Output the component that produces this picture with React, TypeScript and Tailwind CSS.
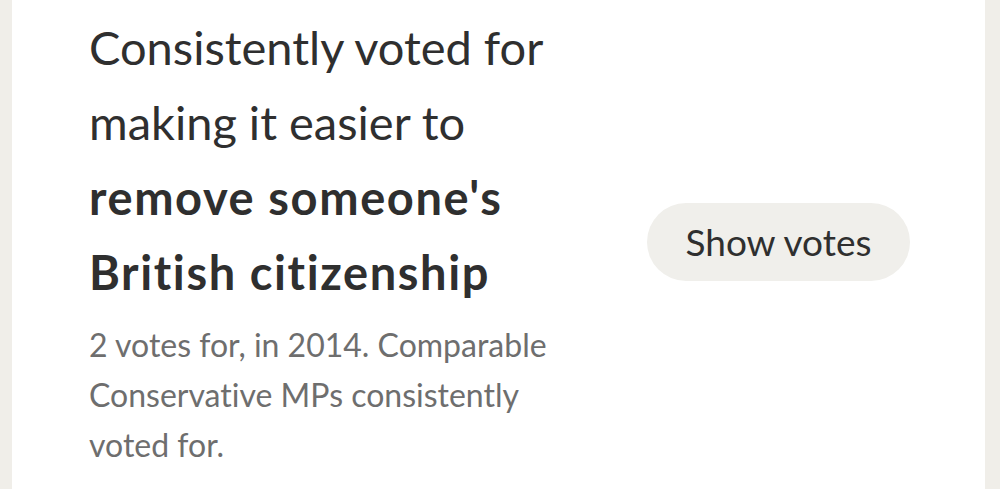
export default function App() {
  return (
    <div
      className="flex h-[489px] w-full bg-[#f0eee9] pl-[12px] pr-[15px] [font-variant-ligatures:none]"
      style={{ fontFamily: 'Lato, "Noto Sans", sans-serif' }}
    >
      <div className="flex flex-1 items-start justify-between bg-white pl-[77px] pr-[75px]">
        <div className="w-[500px] pt-[10px]">
          <h2 className="text-[47px] leading-[75px] text-[#2f2f2f]">
            Consistently voted for making it easier to{' '}
            <b className="font-bold tracking-[1.6px]">remove someone's British citizenship</b>
          </h2>
          <p className="mt-[10px] text-[32px] leading-[50px] text-[#6e6e6e]">
            2 votes for, in 2014. Comparable Conservative MPs consistently voted for.
          </p>
        </div>
        <button
          type="button"
          className="mb-[5px] h-[78px] w-[263px] self-center rounded-full bg-[#f0efeb] text-[37px] text-[#2f2f2f]"
        >
          Show votes
        </button>
      </div>
    </div>
  )
}
